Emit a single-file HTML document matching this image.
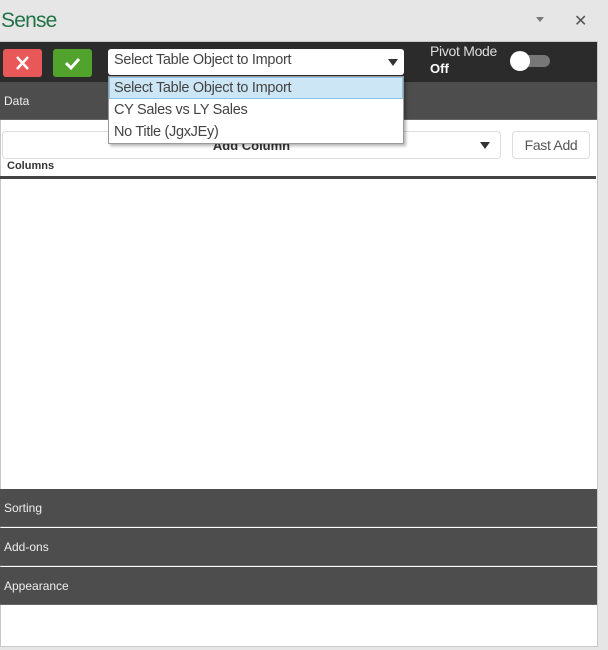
<!DOCTYPE html>
<html><head><style>
*{margin:0;padding:0;box-sizing:border-box}
body{width:608px;height:650px;background:#e6e6e6;position:relative;font-family:"Liberation Sans",sans-serif;overflow:hidden}
.abs{position:absolute}
.title{left:1px;top:9px;font-size:21px;color:#217346;letter-spacing:-0.8px}
.panel{left:0;top:41px;width:598px;height:606px;background:#fff;border:1px solid #c8c8c8}
.tb{left:0;top:42px;width:597px;height:40px;background:#2b2b2b}
.btn{top:49px;width:39px;height:28px;border-radius:3px}
.sel{left:108px;top:49px;width:296px;height:26px;background:#fff;border-radius:3px;font-size:14.5px;color:#444;padding:3px 6px;letter-spacing:-0.3px}
.hdr{left:0;width:597px;height:38px;background:#4d4d4d;color:#eee;font-size:12px;padding-left:4px;line-height:38px;border-bottom:1px solid #666}
.dd{left:108px;top:76px;width:296px;height:68px;background:#fff;border:1px solid #999;box-shadow:2px 2px 3px rgba(0,0,0,.3);font-size:14.5px;color:#444;letter-spacing:-0.3px}
.dd div{height:22px;line-height:22px;padding-left:5px}
</style></head><body>
<div class="abs title">Sense</div>
<div class="abs" style="left:536px;top:17px;width:0;height:0;border-left:4px solid transparent;border-right:4px solid transparent;border-top:5px solid #777"></div>
<div class="abs" style="left:574px;top:11px;font-size:16px;color:#555">✕</div>
<div class="abs panel"></div>
<div class="abs tb"></div>
<div class="abs btn" style="left:3px;background:#e85858"><svg width="39" height="28"><path d="M14 8L25 20M25 8L14 20" stroke="#fff" stroke-width="2.5"/></svg></div>
<div class="abs btn" style="left:53px;background:#52a32e"><svg width="39" height="28"><path d="M13 14L18 19L26 10" stroke="#fff" stroke-width="3" fill="none"/></svg></div>
<div class="abs sel">Select Table Object to Import<span class="abs" style="right:6px;top:10px;border-left:5px solid transparent;border-right:5px solid transparent;border-top:7px solid #333"></span></div>
<div class="abs" style="left:430px;top:43px;color:#ddd;font-size:14px;letter-spacing:-0.3px">Pivot Mode</div>
<div class="abs" style="left:430px;top:61px;color:#fff;font-size:13px;font-weight:bold">Off</div>
<div class="abs" style="left:512px;top:55px;width:38px;height:12px;border-radius:6px;background:#777"></div>
<div class="abs" style="left:510px;top:51px;width:20px;height:20px;border-radius:50%;background:#fff"></div>
<div class="abs hdr" style="top:82px">Data</div>
<div class="abs" style="left:2px;top:131px;width:499px;height:28px;border:1px solid #ddd;border-radius:4px;text-align:center;font-weight:bold;font-size:13px;line-height:28px;color:#333">Add Column<span class="abs" style="right:10px;top:10px;border-left:5px solid transparent;border-right:5px solid transparent;border-top:7px solid #333"></span></div>
<div class="abs" style="left:512px;top:131px;width:78px;height:28px;border:1px solid #ddd;border-radius:4px;text-align:center;font-size:14px;line-height:26px;color:#555;letter-spacing:-0.3px">Fast Add</div>
<div class="abs" style="left:7px;top:160px;font-size:11px;font-weight:bold;color:#333">Columns</div>
<div class="abs" style="left:0;top:176px;width:596px;height:3px;background:#444"></div>
<div class="abs dd"><div style="background:#cde6f5;border:1px solid #8cc4e8;line-height:20px;padding-left:4px">Select Table Object to Import</div><div>CY Sales vs LY Sales</div><div>No Title (JgxJEy)</div></div>
<div class="abs hdr" style="top:489px">Sorting</div>
<div class="abs hdr" style="top:528px">Add-ons</div>
<div class="abs hdr" style="top:567px">Appearance</div>
</body></html>
